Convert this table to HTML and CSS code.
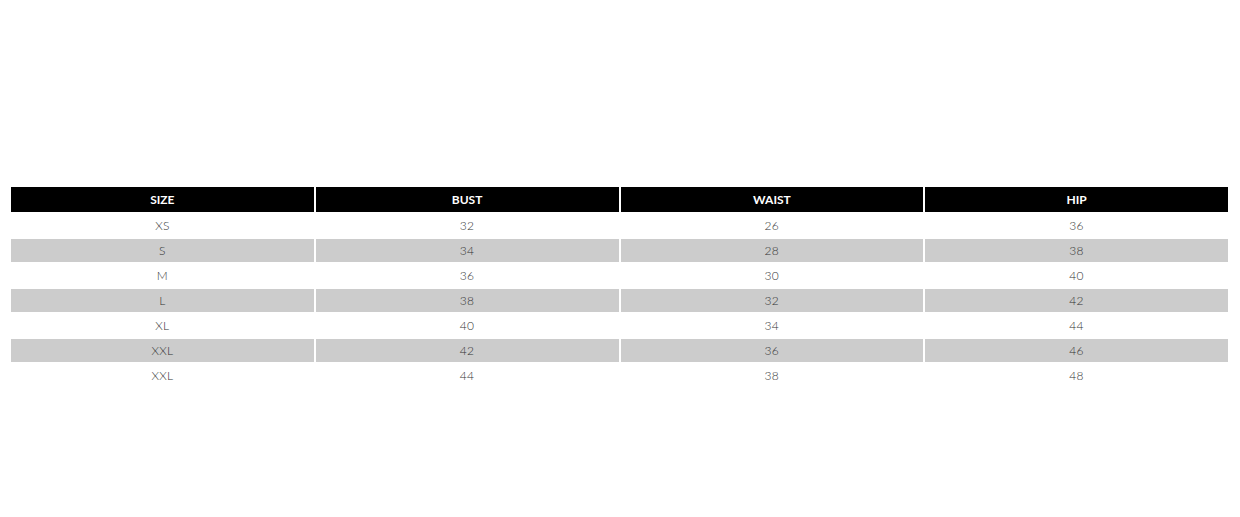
FILE: index.html
```html
<!DOCTYPE html>
<html lang="en">
<head>
<meta charset="utf-8">
<title>Size Chart</title>
<link rel="stylesheet" href="styles.css">
</head>
<body>
<main class="page">
  <table class="size-chart">
    <thead>
      <tr><th>SIZE</th><th>BUST</th><th>WAIST</th><th>HIP</th></tr>
    </thead>
    <tbody>
      <tr><td>XS</td><td>32</td><td>26</td><td>36</td></tr>
      <tr class="alt"><td>S</td><td>34</td><td>28</td><td>38</td></tr>
      <tr><td>M</td><td>36</td><td>30</td><td>40</td></tr>
      <tr class="alt"><td>L</td><td>38</td><td>32</td><td>42</td></tr>
      <tr><td>XL</td><td>40</td><td>34</td><td>44</td></tr>
      <tr class="alt"><td>XXL</td><td>42</td><td>36</td><td>46</td></tr>
      <tr><td>XXL</td><td>44</td><td>38</td><td>48</td></tr>
    </tbody>
  </table>
</main>
</body>
</html>
```

FILE: styles.css
```css
html, body {
  margin: 0;
  padding: 0;
  background: #fff;
}

.page {
  padding: 185px 10px 0 9px;
}

.size-chart {
  width: 100%;
  border-collapse: separate;
  border-spacing: 2px;
  table-layout: fixed;
  font-family: "Lato", "DejaVu Sans", sans-serif;
}

.size-chart th {
  height: 25px;
  padding: 0;
  background: #000;
  color: #fff;
  font-weight: 700;
  font-size: 12px;
  text-align: center;
  vertical-align: middle;
}

.size-chart td {
  height: 23px;
  padding: 0;
  color: #333;
  font-weight: 300;
  font-size: 12px;
  text-align: center;
  vertical-align: middle;
  letter-spacing: 0.3px;
}

.size-chart tr.alt td {
  background: #cccccc;
}
```
